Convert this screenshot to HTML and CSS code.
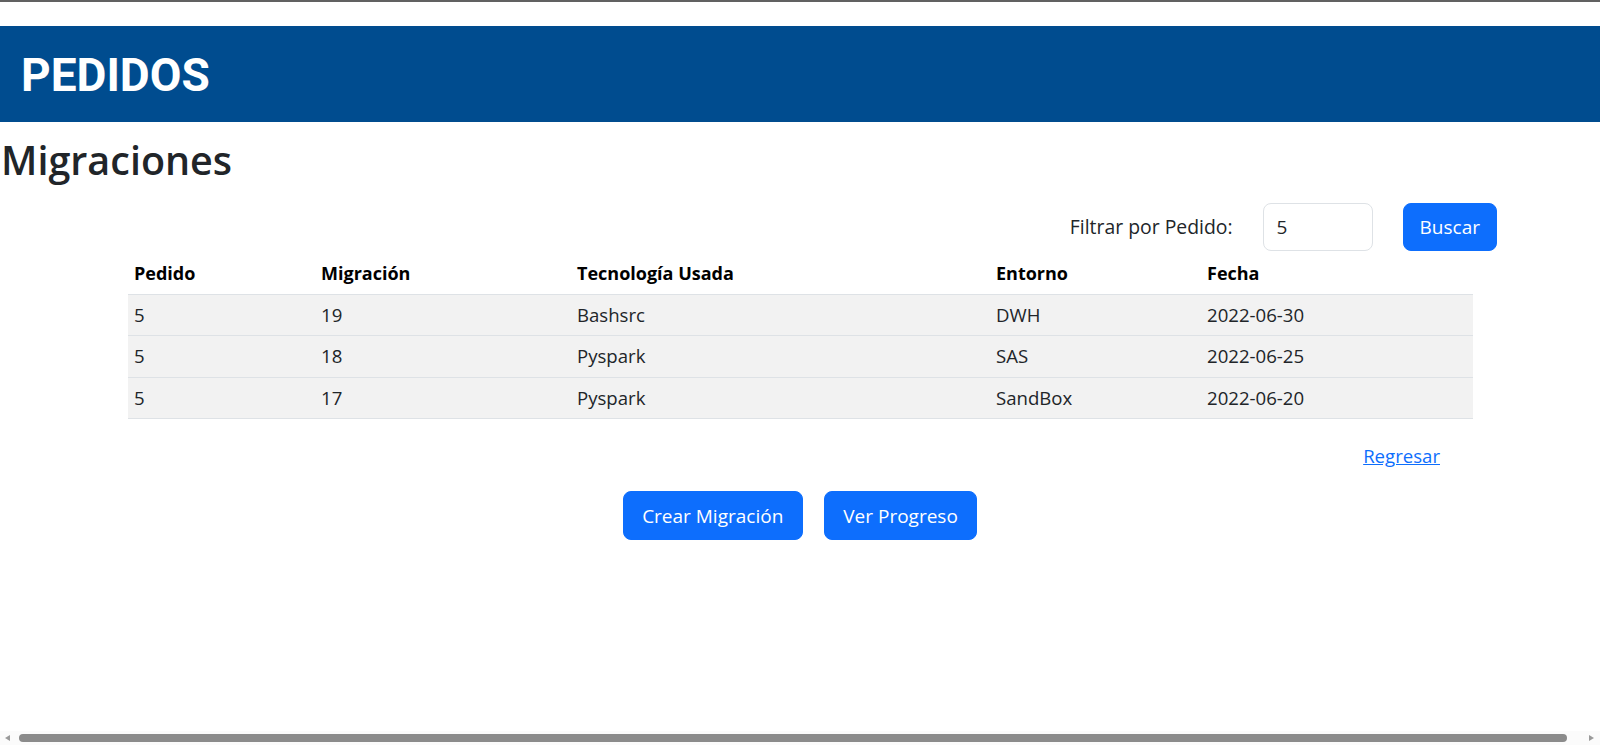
FILE: index.html
```html
<!DOCTYPE html>
<html lang="es">
<head>
<meta charset="utf-8">
<title>Pedidos - Migraciones</title>
<link rel="stylesheet" href="styles.css">
</head>
<body>
<div class="topline"></div>
<header class="bar">
  <h1 class="brand">PEDIDOS</h1>
</header>
<h2 class="title">Migraciones</h2>
<main class="content">
  <form class="filter">
    <label class="filter-label" for="pedido">Filtrar por Pedido:</label>
    <input class="filter-input" id="pedido" type="text" value="5">
    <button class="btn" type="button">Buscar</button>
  </form>
  <table class="grid">
    <thead>
      <tr><th>Pedido</th><th>Migración</th><th>Tecnología Usada</th><th>Entorno</th><th>Fecha</th></tr>
    </thead>
    <tbody>
      <tr><td>5</td><td>19</td><td>Bashsrc</td><td>DWH</td><td>2022-06-30</td></tr>
      <tr><td>5</td><td>18</td><td>Pyspark</td><td>SAS</td><td>2022-06-25</td></tr>
      <tr><td>5</td><td>17</td><td>Pyspark</td><td>SandBox</td><td>2022-06-20</td></tr>
    </tbody>
  </table>
  <div class="back"><a href="#" class="link">Regresar</a></div>
  <div class="actions">
    <button class="btn btn-lg" type="button">Crear Migración</button>
    <button class="btn btn-lg" type="button">Ver Progreso</button>
  </div>
</main>
<div class="hscroll">
  <span class="arrow arrow-left"></span>
  <span class="thumb"></span>
  <span class="arrow arrow-right"></span>
</div>
</body>
</html>
```
FILE: styles.css
```css
* { box-sizing: border-box; }
html, body { margin: 0; padding: 0; }
body {
  font-family: "Open Sans", "Noto Sans", sans-serif;
  font-size: 18.6px;
  line-height: 30px;
  color: #212529;
  background: #fff;
  height: 745px;
  overflow: hidden;
}
.topline { height: 2px; background: #616161; }
.bar {
  margin-top: 24px;
  height: 96px;
  background: #004c8f;
  display: flex;
  align-items: center;
  padding-left: 21px;
}
.brand {
  margin: 0;
  font-family: Roboto, "Liberation Sans", sans-serif;
  font-weight: 700;
  font-size: 46px;
  line-height: 1;
  color: #fff;
  padding-top: 2px;
}
.title {
  margin: 14px 0 0 0;
  font-weight: 600;
  font-size: 39.5px;
  line-height: 48px;
  color: #212529;
  padding-left: 1px;
}
.content { padding-top: 19px; }
.filter {
  display: flex;
  justify-content: flex-end;
  align-items: center;
  gap: 30px;
  padding-right: 103px;
  margin: 0;
}
.filter-label { color: #212529; font-size: 19.4px; }
.filter-input {
  width: 110px;
  height: 48px;
  border: 1px solid #dee2e6;
  border-radius: 8px;
  padding: 0 13px;
  font: inherit;
  font-size: 19px;
  color: #212529;
  outline: none;
}
.btn {
  font: inherit;
  font-size: 19px;
  color: #fff;
  background: #0d6efd;
  border: 1px solid #0d6efd;
  border-radius: 8px;
  height: 48px;
  padding: 0 16px;
  cursor: pointer;
}
.grid {
  margin: 2px 127px 0 128px;
  width: 1345px;
  border-collapse: collapse;
}
.grid th, .grid td {
  text-align: left;
  padding: 5.25px 5px 5.25px 6px;
  border-bottom: 1px solid #dee2e6;
}
.grid th {
  font-weight: 700;
  font-size: 18px;
  color: #000;
}
.grid tbody tr { background: #f2f2f2; }
.grid th:nth-child(1) { width: 187px; }
.grid th:nth-child(2) { width: 256px; }
.grid th:nth-child(3) { width: 419px; }
.grid th:nth-child(4) { width: 211px; }
.back {
  display: flex;
  justify-content: flex-end;
  padding-right: 160px;
  margin-top: 22px;
}
.link { color: #0d6efd; text-decoration: underline; }
.actions {
  display: flex;
  justify-content: center;
  gap: 21px;
  margin-top: 20px;
}
.btn-lg { height: 49px; padding: 0 18.5px; }
.hscroll {
  position: fixed;
  left: 0;
  right: 0;
  bottom: 0;
  height: 14px;
  background: #fbfbfb;
  display: flex;
  align-items: center;
  padding: 0 6px 0 5px;
}
.thumb {
  flex: 1;
  height: 8px;
  margin: 0 22px 0 9px;
  border-radius: 4px;
  background: #8b8b8b;
}
.arrow { width: 0; height: 0; border-top: 3px solid transparent; border-bottom: 3px solid transparent; }
.arrow-left { border-right: 5px solid #9a9a9a; }
.arrow-right { border-left: 5px solid #9a9a9a; }
```
